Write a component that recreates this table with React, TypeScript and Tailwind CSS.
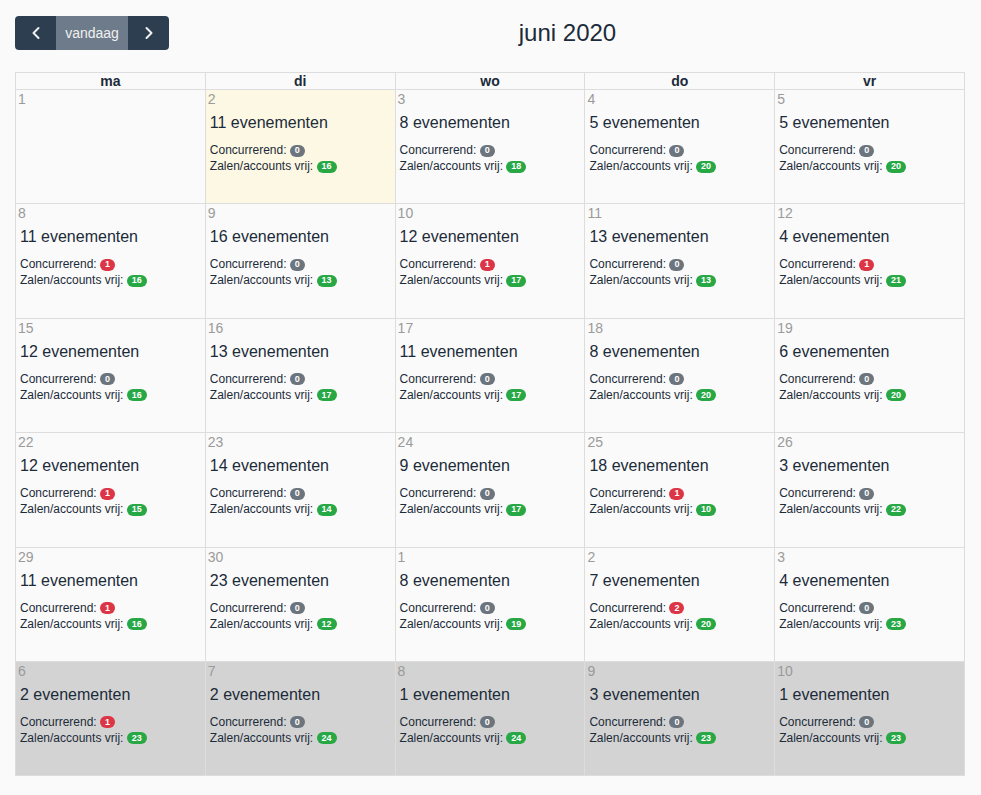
import { ChevronLeft, ChevronRight } from "lucide-react";

type Day = { d: number; n?: number; c?: number; v?: number };

const ROWS: Day[][] = [
  [{ d: 1 }, { d: 2, n: 11, c: 0, v: 16 }, { d: 3, n: 8, c: 0, v: 18 }, { d: 4, n: 5, c: 0, v: 20 }, { d: 5, n: 5, c: 0, v: 20 }],
  [{ d: 8, n: 11, c: 1, v: 16 }, { d: 9, n: 16, c: 0, v: 13 }, { d: 10, n: 12, c: 1, v: 17 }, { d: 11, n: 13, c: 0, v: 13 }, { d: 12, n: 4, c: 1, v: 21 }],
  [{ d: 15, n: 12, c: 0, v: 16 }, { d: 16, n: 13, c: 0, v: 17 }, { d: 17, n: 11, c: 0, v: 17 }, { d: 18, n: 8, c: 0, v: 20 }, { d: 19, n: 6, c: 0, v: 20 }],
  [{ d: 22, n: 12, c: 1, v: 15 }, { d: 23, n: 14, c: 0, v: 14 }, { d: 24, n: 9, c: 0, v: 17 }, { d: 25, n: 18, c: 1, v: 10 }, { d: 26, n: 3, c: 0, v: 22 }],
  [{ d: 29, n: 11, c: 1, v: 16 }, { d: 30, n: 23, c: 0, v: 12 }, { d: 1, n: 8, c: 0, v: 19 }, { d: 2, n: 7, c: 2, v: 20 }, { d: 3, n: 4, c: 0, v: 23 }],
  [{ d: 6, n: 2, c: 1, v: 23 }, { d: 7, n: 2, c: 0, v: 24 }, { d: 8, n: 1, c: 0, v: 24 }, { d: 9, n: 3, c: 0, v: 23 }, { d: 10, n: 1, c: 0, v: 23 }],
];

const DAYS = ["ma", "di", "wo", "do", "vr"];

function Badge({ value, kind }: { value: number; kind: "gray" | "red" | "green" }) {
  const bg = kind === "red" ? "bg-[#dc3545]" : kind === "green" ? "bg-[#28a745]" : "bg-[#6c757d]";
  return (
    <span className={`${bg} inline-block rounded-full text-white text-[9px] font-bold leading-none px-[5px] py-[1.5px] align-[1px]`}>
      {value}
    </span>
  );
}

function Cell({ day, today, past }: { day: Day; today: boolean; past: boolean }) {
  const bg = today ? "bg-[#fcf8e3]" : past ? "bg-[#d3d3d3]" : "";
  return (
    <div className={`${bg} h-[114.4px] border-r border-b border-[#dddddd]`}>
      <div className="pt-[1px] px-[2px] text-[14px] leading-[16px] text-[#9a9a9a]">{day.d}</div>
      {day.n !== undefined && (
        <div className="px-[4px]">
          <div className="mt-[6px] text-[16px] leading-[20px]">{day.n} evenementen</div>
          <div className="mt-[9px] text-[12px] leading-[16px]">
            <div>
              Concurrerend: <Badge value={day.c!} kind={day.c! > 0 ? "red" : "gray"} />
            </div>
            <div>
              Zalen/accounts vrij: <Badge value={day.v!} kind="green" />
            </div>
          </div>
        </div>
      )}
    </div>
  );
}

export default function App() {
  return (
    <div className="min-h-screen bg-[#fafafa] px-[15px] pt-[16px] text-[#1c2b39]" style={{ fontFamily: '"Liberation Sans", Arial, sans-serif' }}>
      {/* Toolbar */}
      <div className="flex items-center justify-between mb-[22px]">
        <div className="flex h-[34px] rounded-[4px] overflow-hidden text-[14px] text-[#f0f0f0]">
          <button className="w-[41px] bg-[#2c3e50] flex items-center justify-center">
            <ChevronLeft className="w-[20px] h-[20px]" strokeWidth={2.4} />
          </button>
          <button className="w-[72px] bg-[#6e7b8a] flex items-center justify-center">vandaag</button>
          <button className="w-[41px] bg-[#2c3e50] flex items-center justify-center">
            <ChevronRight className="w-[20px] h-[20px]" strokeWidth={2.4} />
          </button>
        </div>
        <h2 className="text-[24px] leading-[34px]">juni 2020</h2>
        <div />
      </div>

      {/* Month grid */}
      <div className="w-[950px] border-l border-t border-[#dddddd]">
        <div className="grid grid-cols-5">
          {DAYS.map((d) => (
            <div key={d} className="h-[17px] border-r border-b border-[#dddddd] text-center text-[14px] leading-[16px] font-bold">
              {d}
            </div>
          ))}
        </div>
        {ROWS.map((row, ri) => (
          <div key={ri} className="grid grid-cols-5">
            {row.map((day, ci) => (
              <Cell key={ci} day={day} today={ri === 0 && ci === 1} past={ri === 5} />
            ))}
          </div>
        ))}
      </div>
    </div>
  );
}
